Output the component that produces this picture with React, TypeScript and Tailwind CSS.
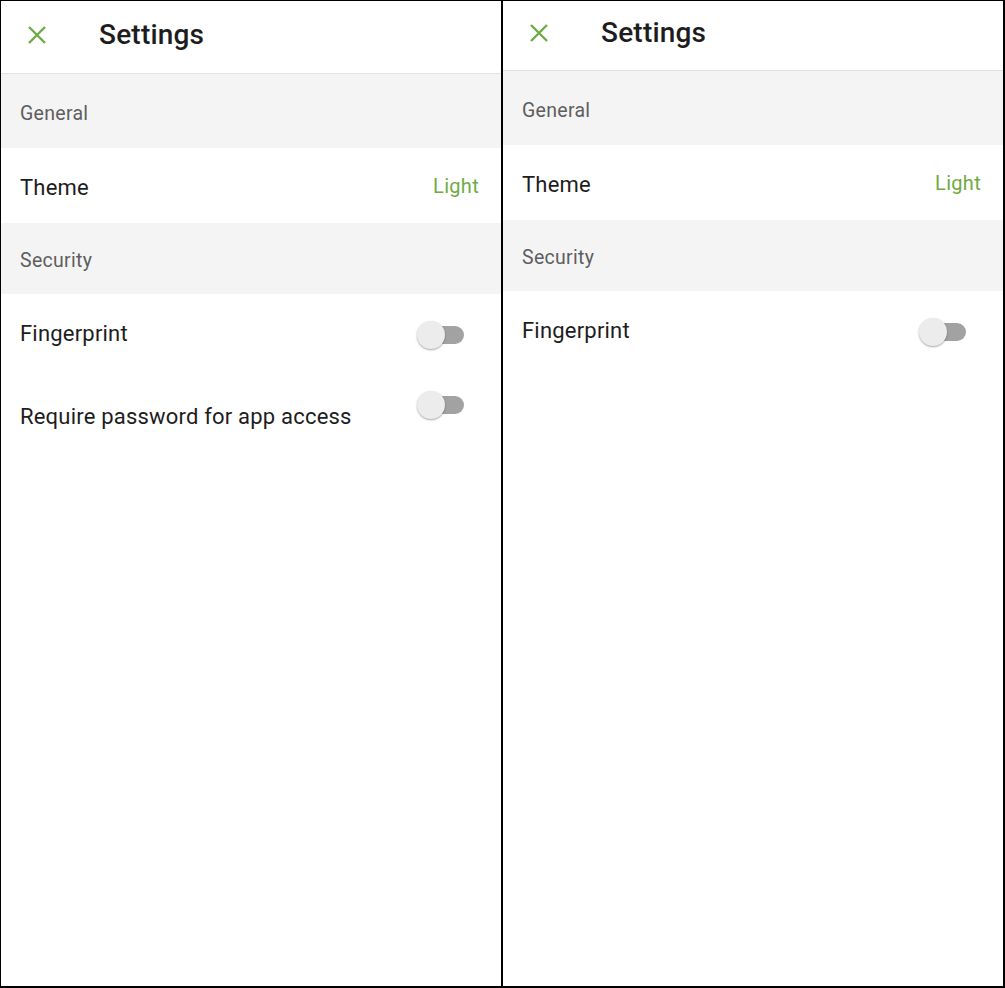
import React from "react";

const Toggle = ({ className = "" }: { className?: string }) => (
  <div className={"relative w-[47px] h-[28px] shrink-0 " + className}>
    <div className="absolute right-0 top-[5px] h-[18px] w-[40px] rounded-full bg-[#a2a2a2]" />
    <div className="absolute left-0 top-0 h-[28px] w-[28px] rounded-full bg-[#ececec] shadow-[0_1px_2px_rgba(0,0,0,0.35)]" />
  </div>
);

const CloseIcon = () => (
  <svg width="20" height="20" viewBox="0 0 20 20" className="shrink-0">
    <path d="M2 2 L18 18 M18 2 L2 18" stroke="#6fab45" strokeWidth="2.4" strokeLinecap="butt" />
  </svg>
);

const SectionLabel = ({ label, h }: { label: string; h: string }) => (
  <div className={"flex items-center bg-[#f4f4f4] pl-[19px] text-[19.5px] tracking-[0.3px] text-[#5e5e5e] " + h}>
    <span className="pt-[5px]">{label}</span>
  </div>
);

const SettingsPanel = ({ header, showPassword }: { header: string; showPassword: boolean }) => (
  <div className="flex w-[500px] flex-col bg-white">
    <div className={"flex items-center border-b border-[#e2e2e2] " + header}>
      <div className="ml-[26px] flex w-[72px]">
        <CloseIcon />
      </div>
      <h1 className="text-[28px] font-medium text-[#1d1d1d] tracking-[0.2px]">Settings</h1>
    </div>

    <SectionLabel label="General" h="h-[74px]" />
    <div className="flex h-[75px] items-center justify-between pl-[19px] pr-[22px]">
      <span className="pt-[3px] text-[22px] tracking-[0.2px] text-[#1d1d1d]">Theme</span>
      <span className="text-[20px] text-[#6fab45] tracking-[0.3px]">Light</span>
    </div>
    <SectionLabel label="Security" h="h-[71px]" />

    <div className="flex h-[78px] items-center justify-between pl-[19px] pr-[37px]">
      <span className="pt-[1px] text-[22px] tracking-[0.2px] text-[#1d1d1d]">Fingerprint</span>
      <Toggle className="mt-[4px]" />
    </div>
    {showPassword && (
      <div className="flex items-start justify-between pl-[19px] pr-[37px] pt-[19px]">
        <span className="mt-[9px] text-[22px] tracking-[0.2px] text-[#1d1d1d]">Require password for app access</span>
        <Toggle />
      </div>
    )}
  </div>
);

export default function App() {
  return (
    <div className="flex h-[988px] w-[1005px] border-t border-l border-r-2 border-b-2 border-black bg-white font-['Roboto',sans-serif]">
      <SettingsPanel header="h-[73px] pb-[4px]" showPassword={true} />
      <div className="w-[2px] shrink-0 bg-black" />
      <SettingsPanel header="h-[70px] pb-[6px]" showPassword={false} />
    </div>
  );
}
